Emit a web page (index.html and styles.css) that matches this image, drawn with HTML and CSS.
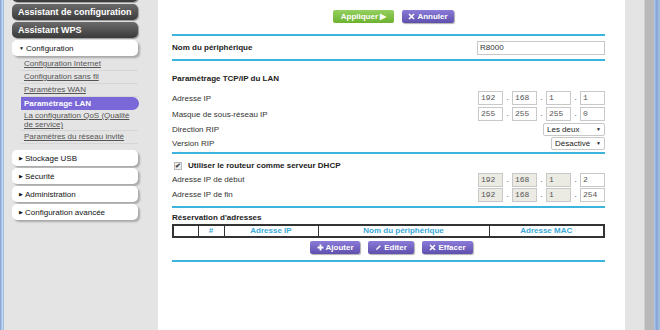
FILE: index.html
```html
<!DOCTYPE html>
<html>
  <head>
    <meta name="viewport" content="width=device-width, initial-scale=1" />
    <link rel="stylesheet" href="styles.css">
  </head>
  <body>
    <div class="page">
      <div class="edge"></div>

      <nav class="sidebar">
        <div class="nav-dark stub"></div>
        <div class="nav-dark">Assistant de configuration</div>
        <div class="nav-dark">Assistant WPS</div>
        <div class="nav-light"><span class="tri">&#9660;</span>Configuration</div>
        <div class="sub">
          <a href="#">Configuration Internet</a>
          <a href="#">Configuration sans fil</a>
          <a href="#">Paramètres WAN</a>
          <a href="#" class="active">Paramétrage LAN</a>
          <a href="#" class="two">La configuration QoS (Qualité de service)</a>
          <a href="#">Paramètres du réseau invité</a>
        </div>
        <div class="group">
          <div class="nav-light"><span class="tri">&#9654;</span>Stockage USB</div>
          <div class="nav-light"><span class="tri">&#9654;</span>Sécurité</div>
          <div class="nav-light"><span class="tri">&#9654;</span>Administration</div>
          <div class="nav-light"><span class="tri">&#9654;</span>Configuration avancée</div>
        </div>
      </nav>

      <main class="content">
        <div class="actions">
          <button class="btn btn-green">Appliquer &#9654;</button>
          <button class="btn btn-purple btn-cancel">
            <svg width="7" height="7" viewBox="0 0 7 7"><path d="M1 1L6 6M6 1L1 6" stroke="#fff" stroke-width="1.6"/></svg>Annuler
          </button>
        </div>

        <div class="rule"></div>
        <div class="row row-name">
          <span class="bold">Nom du périphérique</span>
          <div class="text-input">R8000</div>
        </div>
        <div class="rule"></div>

        <div class="title">Paramétrage TCP/IP du LAN</div>
        <div class="row ip-row">
          <span>Adresse IP</span>
          <div class="ip">
            <span class="box">192</span><span class="dot">.</span><span class="box">168</span><span class="dot">.</span><span class="box">1</span><span class="dot">.</span><span class="box">1</span>
          </div>
        </div>
        <div class="row ip-row">
          <span>Masque de sous-réseau IP</span>
          <div class="ip">
            <span class="box">255</span><span class="dot">.</span><span class="box">255</span><span class="dot">.</span><span class="box">255</span><span class="dot">.</span><span class="box">0</span>
          </div>
        </div>
        <div class="row sel-row">
          <span>Direction RIP</span>
          <div class="select sel-wide">Les deux<span class="arrow">&#9660;</span></div>
        </div>
        <div class="row sel-row">
          <span>Version RIP</span>
          <div class="select sel-narrow">Désactivé<span class="arrow">&#9660;</span></div>
        </div>
        <div class="rule rule-gap"></div>

        <div class="check-row bold">
          <span class="check">&#10004;</span>Utiliser le routeur comme serveur DHCP
        </div>
        <div class="row dhcp-row">
          <span>Adresse IP de début</span>
          <div class="ip">
            <span class="box ro">192</span><span class="dot">.</span><span class="box ro">168</span><span class="dot">.</span><span class="box ro">1</span><span class="dot">.</span><span class="box">2</span>
          </div>
        </div>
        <div class="row dhcp-row">
          <span>Adresse IP de fin</span>
          <div class="ip">
            <span class="box ro">192</span><span class="dot">.</span><span class="box ro">168</span><span class="dot">.</span><span class="box ro">1</span><span class="dot">.</span><span class="box">254</span>
          </div>
        </div>
        <div class="rule rule-dhcp"></div>

        <div class="res-title bold">Réservation d'adresses</div>
        <table class="res-table">
          <tr>
            <th class="c1"></th>
            <th class="c2">#</th>
            <th class="c3">Adresse IP</th>
            <th class="c4">Nom du périphérique</th>
            <th class="c5">Adresse MAC</th>
          </tr>
        </table>
        <div class="res-actions">
          <button class="btn btn-purple b-add">
            <svg width="7" height="7" viewBox="0 0 7 7"><path d="M3.5 0.5V6.5M0.5 3.5H6.5" stroke="#fff" stroke-width="1.8"/></svg>Ajouter
          </button>
          <button class="btn btn-purple b-edit">
            <svg width="7" height="7" viewBox="0 0 7 7"><path d="M1 6L1.4 4.6L4.8 1.2L5.8 2.2L2.4 5.6Z" fill="#fff"/></svg>Editer
          </button>
          <button class="btn btn-purple b-del">
            <svg width="7" height="7" viewBox="0 0 7 7"><path d="M1 1L6 6M6 1L1 6" stroke="#fff" stroke-width="1.5"/></svg>Effacer
          </button>
        </div>
        <div class="rule rule-end"></div>
      </main>

      <div class="gutter"></div>
      <div class="scroll"></div>
      <div class="frame"></div>
    </div>
  </body>
</html>
```

FILE: styles.css
```css
body {
  margin: 0;
  font-family: "Liberation Sans", Arial, Helvetica, sans-serif;
  font-size: 8px;
  color: #333;
}
* {
  box-sizing: border-box;
}

.page {
  display: flex;
  height: 330px;
  overflow: hidden;
}

.edge {
  width: 4px;
  background: linear-gradient(to right, #7f9fcc, #c3d6f0 60%, #9ab5dc);
}

/* sidebar */
.sidebar {
  width: 154px;
  background: #e4e4e4;
  padding-left: 8px;
  display: flex;
  flex-direction: column;
  gap: 2px;
}

.nav-dark {
  width: 126px;
  height: 16px;
  border-radius: 5px;
  background: linear-gradient(#6b6b6b, #3a3a3a);
  color: #fff;
  font-weight: bold;
  font-size: 9px;
  line-height: 16px;
  padding-left: 6px;
  box-shadow: 1px 1px 1px #9a9a9a;
  flex-shrink: 0;
}
.stub {
  margin-top: -14px;
}

.nav-light {
  width: 126px;
  height: 16px;
  border-radius: 5px;
  background: #fff;
  color: #111;
  line-height: 16px;
  padding-left: 7px;
  box-shadow: 2px 2px 2px #a8a8a8;
  flex-shrink: 0;
}
.tri {
  font-size: 5px;
  vertical-align: 1px;
  margin-right: 2px;
}

.sub {
  margin-left: 9px;
  width: 117px;
}
.sub a {
  display: block;
  line-height: 12px;
  border-bottom: 1px solid #d6d6d6;
  padding-left: 3px;
  color: #555;
}
.sub a.active {
  width: 118px;
  line-height: 13px;
  border-bottom: none;
  background: #7a67d8;
  color: #fff;
  font-weight: bold;
  text-decoration: none;
  border-radius: 0 7px 7px 0;
}
.sub a.two {
  line-height: 9px;
  padding-top: 1px;
  padding-bottom: 1px;
  padding-right: 8px;
}

.group {
  margin-top: 4px;
  display: flex;
  flex-direction: column;
  gap: 2px;
}

/* main panel */
.content {
  width: 467px;
  background: #fff;
  padding: 10px 20px 0 14px;
}

.bold {
  font-weight: bold;
  color: #222;
}

.actions {
  display: flex;
  justify-content: center;
  gap: 8px;
  padding-left: 10px;
}

.btn {
  height: 13px;
  border: none;
  border-radius: 2px;
  padding: 0;
  color: #fff;
  font-family: inherit;
  font-weight: bold;
  font-size: 8px;
  line-height: 13px;
  display: flex;
  align-items: center;
  justify-content: center;
  gap: 2px;
  cursor: pointer;
}
.btn-green {
  width: 61px;
  background: linear-gradient(#94d05e, #6db232);
}
.btn-purple {
  background: linear-gradient(#8a7bd8, #5f50ae);
  box-shadow: 1px 1px 1px #b0b0b0;
}
.btn-cancel {
  width: 52px;
}

.rule {
  height: 2px;
  background: #3cb4de;
}
.actions + .rule {
  margin-top: 11px;
}

.row {
  display: flex;
  align-items: center;
  justify-content: space-between;
}
.row-name {
  height: 23px;
}

.text-input {
  width: 128px;
  height: 14px;
  border: 1px solid #c8c8c8;
  padding-left: 2px;
  line-height: 12px;
  color: #333;
}

.title {
  padding: 12px 0 5px;
  line-height: 12px;
  font-weight: bold;
  color: #222;
}

.ip-row {
  height: 16px;
}
.sel-row {
  height: 14px;
}
.dhcp-row {
  height: 15px;
}

.ip {
  display: flex;
}
.box {
  width: 25px;
  height: 14px;
  border: 1px solid #c8c8c8;
  font-family: "Liberation Mono", "Courier New", monospace;
  font-size: 8px;
  line-height: 12px;
  padding-left: 2px;
  color: #555;
}
.box.ro {
  background: #ebebe3;
}
.dot {
  width: 9px;
  text-align: center;
  line-height: 14px;
}

.select {
  height: 13px;
  border: 1px solid #c8c8c8;
  border-radius: 2px;
  padding: 0 3px;
  line-height: 11px;
  font-size: 8px;
  color: #222;
  display: flex;
  justify-content: space-between;
}
.sel-wide {
  width: 62px;
}
.sel-narrow {
  width: 54px;
}
.arrow {
  font-size: 5px;
}

.rule-gap {
  margin-top: 2px;
}

.check-row {
  padding-top: 6px;
  line-height: 12px;
  display: flex;
  align-items: center;
}
.check {
  width: 8px;
  height: 8px;
  margin: 0 6px 0 2px;
  border: 1px solid #b8b8b8;
  background: #eee;
  font-size: 7px;
  line-height: 6px;
  text-align: center;
  color: #444;
}

.rule-dhcp {
  margin-top: 4px;
}

.res-title {
  padding-top: 4px;
  line-height: 12px;
}

.res-table {
  width: 433px;
  border-collapse: collapse;
  border: 2px solid #333;
}
.res-table th {
  height: 12px;
  padding: 0;
  border: 1px solid #333;
  color: #3aa8d8;
  font-size: 8px;
  line-height: 10px;
}
.c1 { width: 25px; }
.c2 { width: 26px; }
.c3 { width: 94px; }
.c4 { width: 171px; }

.res-actions {
  display: flex;
  justify-content: center;
  gap: 8px;
  margin-top: 3px;
  padding-left: 6px;
}
.b-add { width: 50px; }
.b-edit { width: 46px; }
.b-del { width: 51px; }

.rule-end {
  margin-top: 6px;
}

/* window chrome on the right */
.gutter {
  width: 19px;
  background: #e4e4e4;
}
.scroll {
  width: 10px;
  background: #b9b9b9;
  border-left: 1px solid #d0d0d0;
}
.frame {
  width: 6px;
  background: linear-gradient(to right, #b7cdec, #86a6d4 40%, #a9c2e6);
}
```
